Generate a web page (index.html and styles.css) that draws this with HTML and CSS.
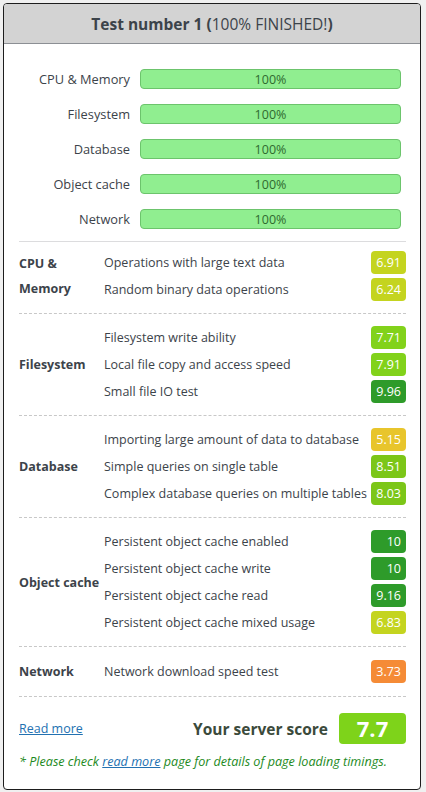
FILE: index.html
```html
<!DOCTYPE html>
<html>
<head>
<meta charset="utf-8">
<link rel="stylesheet" href="styles.css">
</head>
<body>
<div class="card">
  <div class="card-head"><span class="title"><b>Test number 1</b> <b>(</b>100% FINISHED!<b>)</b></span></div>
  <div class="card-body">
    <div class="bars">
      <div class="bar-row"><span class="bar-label">CPU &amp; Memory</span><div class="bar">100%</div></div>
      <div class="bar-row"><span class="bar-label">Filesystem</span><div class="bar">100%</div></div>
      <div class="bar-row"><span class="bar-label">Database</span><div class="bar">100%</div></div>
      <div class="bar-row"><span class="bar-label">Object cache</span><div class="bar">100%</div></div>
      <div class="bar-row"><span class="bar-label">Network</span><div class="bar">100%</div></div>
    </div>

    <div class="group first">
      <div class="cat">CPU &amp;<br>Memory</div>
      <div class="tests">
        <div class="test"><span>Operations with large text data</span><span class="score s-yg">6.91</span></div>
        <div class="test"><span>Random binary data operations</span><span class="score s-yg">6.24</span></div>
      </div>
    </div>
    <div class="group">
      <div class="cat">Filesystem</div>
      <div class="tests">
        <div class="test"><span>Filesystem write ability</span><span class="score s-lg">7.71</span></div>
        <div class="test"><span>Local file copy and access speed</span><span class="score s-lg">7.91</span></div>
        <div class="test"><span>Small file IO test</span><span class="score s-g">9.96</span></div>
      </div>
    </div>
    <div class="group">
      <div class="cat">Database</div>
      <div class="tests">
        <div class="test"><span>Importing large amount of data to database</span><span class="score s-y">5.15</span></div>
        <div class="test"><span>Simple queries on single table</span><span class="score s-mg">8.51</span></div>
        <div class="test"><span>Complex database queries on multiple tables</span><span class="score s-mg">8.03</span></div>
      </div>
    </div>
    <div class="group">
      <div class="cat">Object cache</div>
      <div class="tests">
        <div class="test"><span>Persistent object cache enabled</span><span class="score s-g">10</span></div>
        <div class="test"><span>Persistent object cache write</span><span class="score s-g">10</span></div>
        <div class="test"><span>Persistent object cache read</span><span class="score s-g">9.16</span></div>
        <div class="test"><span>Persistent object cache mixed usage</span><span class="score s-yg">6.83</span></div>
      </div>
    </div>
    <div class="group">
      <div class="cat">Network</div>
      <div class="tests">
        <div class="test"><span>Network download speed test</span><span class="score s-o">3.73</span></div>
      </div>
    </div>

    <div class="summary">
      <a href="#" class="link">Read more</a>
      <div class="total"><span class="total-label">Your server score</span><span class="total-score">7.7</span></div>
    </div>
    <p class="note">* Please check <a href="#" class="link">read more</a> page for details of page loading timings.</p>
  </div>
</div>
</body>
</html>
```
FILE: styles.css
```css
html, body {
  margin: 0;
  padding: 0;
  background: #f0f0f0;
}
body {
  font-family: "Open Sans", "Noto Sans", sans-serif;
  font-size: 12.5px;
  color: #3c434a;
  padding: 3px 4px 3px 3px;
}
.card {
  background: #fff;
  border: 1px solid #1d1d1d;
  border-radius: 4px;
  overflow: hidden;
  width: 418px;
  box-sizing: border-box;
}
.card-head {
  background: #d3d3d3;
  border-bottom: 1px solid #8c8f94;
  height: 39px;
  display: flex;
  align-items: center;
  justify-content: center;
  font-size: 15.5px;
  color: #3c434a;
}
.card-head b { font-weight: 700; }
.card-body {
  padding: 0 14px 0 15px;
}
.bars {
  padding: 25px 0 12px;
  border-bottom: 1px solid #dcdcde;
  display: flex;
  flex-direction: column;
  gap: 15px;
}
.bar-row {
  display: flex;
  align-items: center;
  gap: 10px;
  padding-right: 5px;
}
.bar-label {
  width: 111px;
  text-align: right;
  white-space: nowrap;
  font-size: 12.8px;
}
.bar {
  flex: 1;
  height: 18px;
  background: #90ee90;
  border: 1px solid #6cc46c;
  border-radius: 4px;
  text-align: center;
  line-height: 19px;
  font-size: 12.5px;
  color: #2f6a2f;
}
.group {
  display: flex;
  align-items: center;
  padding: 12px 0;
  border-bottom: 1px dashed #c8c8c8;
}
.group.first { padding-top: 9px; }
.cat {
  width: 85px;
  flex: none;
  font-weight: 700;
  line-height: 25px;
  white-space: nowrap;
}
.tests {
  flex: 1;
  display: flex;
  flex-direction: column;
  gap: 4px;
}
.test {
  display: flex;
  align-items: center;
  justify-content: space-between;
  height: 23px;
  white-space: nowrap;
}
.score {
  width: 35px;
  height: 23px;
  box-sizing: border-box;
  border-radius: 4px;
  color: #fff;
  text-align: right;
  padding-right: 5px;
  line-height: 23px;
  font-size: 12.5px;
}
.s-yg { background: #c4d41f; }
.s-lg { background: #82d21b; }
.s-mg { background: #7cc618; }
.s-g  { background: #2e9b2a; }
.s-y  { background: #e8c52c; }
.s-o  { background: #f58b36; }
.summary {
  display: flex;
  align-items: center;
  justify-content: space-between;
  padding-top: 16px;
}
.link {
  color: #2271b1;
  text-decoration: underline;
}
.total {
  display: flex;
  align-items: center;
  gap: 11px;
}
.total-label {
  font-weight: 700;
  font-size: 15.5px;
  color: #3b4a3b;
}
.total-score {
  width: 67px;
  height: 31px;
  background: #7ed31a;
  border-radius: 4px;
  color: #fff;
  font-weight: 700;
  font-size: 22px;
  line-height: 31px;
  text-align: center;
}
.note {
  margin: 9px 0 0;
  padding-bottom: 19px;
  font-style: italic;
  font-size: 12.6px;
  color: #1d8a1d;
}
```
